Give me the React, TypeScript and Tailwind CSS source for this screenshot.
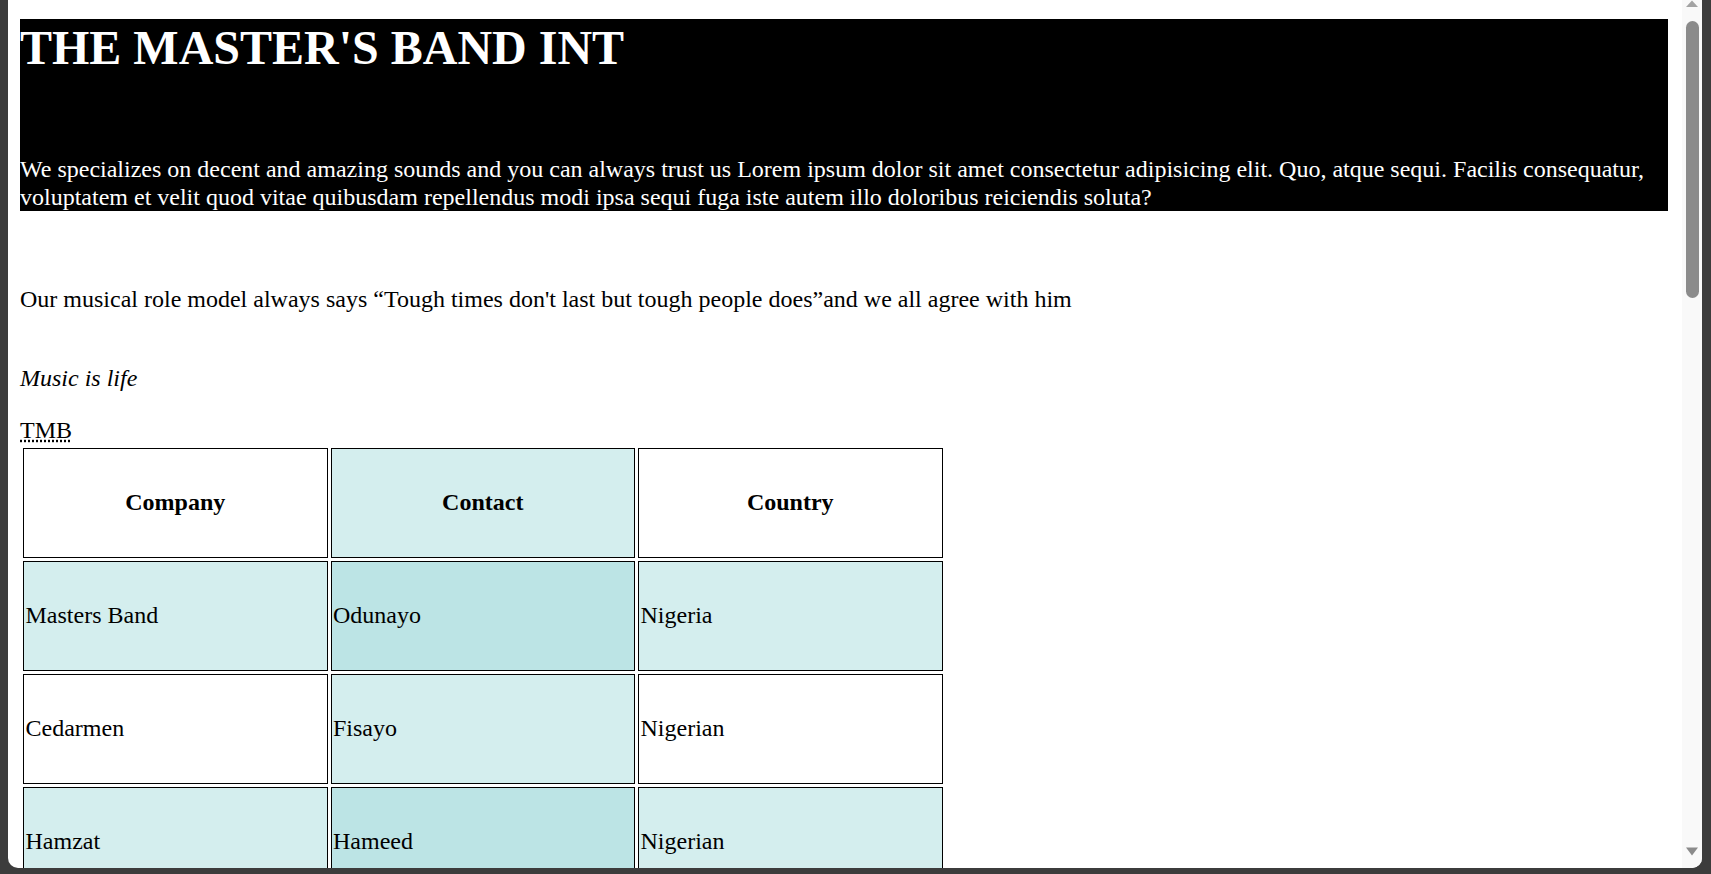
import React from "react";

const LIGHT = "bg-[#d4eeee]";
const DARK = "bg-[#bce4e5]";

const rows: { company: string; contact: string; country: string }[] = [
  { company: "Masters Band", contact: "Odunayo", country: "Nigeria" },
  { company: "Cedarmen", contact: "Fisayo", country: "Nigerian" },
  { company: "Hamzat", contact: "Hameed", country: "Nigerian" },
];

export default function App() {
  return (
    <div
      className="flex h-[874px] w-[1711px] overflow-hidden bg-[#3c3c3c] pl-[8px] pr-[9px] pb-[6px]"
      style={{ fontFamily: '"Liberation Serif", "Times New Roman", serif' }}
    >
      <div className="flex flex-1 overflow-hidden rounded-b-[10px] bg-white">
        {/* page content */}
        <div className="flex-1 overflow-hidden pl-[12px] pr-[14px] pt-[19px] text-[24px] leading-[27.6px] text-black">
          <div className="bg-black pt-[1px] text-white">
            <h1 className="text-[48px] font-bold leading-[55px]">THE MASTER'S BAND INT</h1>
            <p className="mt-[81px] text-[24px] leading-[27.6px]">
              We specializes on decent and amazing sounds and you can always trust us Lorem ipsum dolor sit amet
              consectetur adipisicing elit. Quo, atque sequi. Facilis consequatur, voluptatem et velit quod vitae
              quibusdam repellendus modi ipsa sequi fuga iste autem illo doloribus reiciendis soluta?
            </p>
          </div>
          <p className="mt-[75px]">
            Our musical role model always says “Tough times don't last but tough people does”and we all agree with him
          </p>
          <p className="mt-[51px] italic">Music is life</p>
          <div className="mt-[25px]">
            <abbr title="The Master's Band" className="underline decoration-dotted">
              TMB
            </abbr>
          </div>
          <table className="table-fixed border-separate border-spacing-[3px]">
            <thead>
              <tr>
                <th className="h-[110px] w-[304.5px] border border-black bg-white p-[1.5px] text-center font-bold">
                  Company
                </th>
                <th className={`h-[110px] w-[304.5px] border border-black ${LIGHT} p-[1.5px] text-center font-bold`}>
                  Contact
                </th>
                <th className="h-[110px] w-[304.5px] border border-black bg-white p-[1.5px] text-center font-bold">
                  Country
                </th>
              </tr>
            </thead>
            <tbody>
              {rows.map((r, i) => {
                const odd = i % 2 === 0;
                return (
                  <tr key={r.company}>
                    <td
                      className={`h-[110px] border border-black p-[1.5px] text-left align-middle ${
                        odd ? LIGHT : "bg-white"
                      }`}
                    >
                      {r.company}
                    </td>
                    <td
                      className={`h-[110px] border border-black p-[1.5px] text-left align-middle ${
                        odd ? DARK : LIGHT
                      }`}
                    >
                      {r.contact}
                    </td>
                    <td
                      className={`h-[110px] border border-black p-[1.5px] text-left align-middle ${
                        odd ? LIGHT : "bg-white"
                      }`}
                    >
                      {r.country}
                    </td>
                  </tr>
                );
              })}
            </tbody>
          </table>
        </div>

        {/* scrollbar */}
        <div className="flex w-[20px] flex-col items-center bg-[#f9f9f9]">
          <svg width="14" height="7" viewBox="0 0 14 7" className="mt-0">
            <path d="M1 7 L7 0.5 L13 7 Z" fill="#a3a3a3" />
          </svg>
          <div className="mt-[14px] h-[277px] w-[13px] rounded-full bg-[#8b8b8b]" />
          <div className="flex-1" />
          <svg width="14" height="9" viewBox="0 0 14 9" className="mb-[12px]">
            <path d="M1 0.5 L13 0.5 L7 8.5 Z" fill="#8b8b8b" />
          </svg>
        </div>
      </div>
    </div>
  );
}
